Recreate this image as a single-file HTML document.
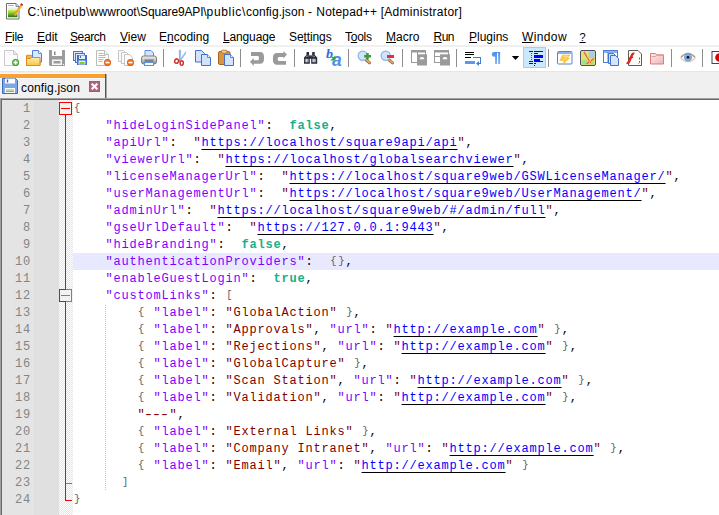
<!DOCTYPE html>
<html lang="en"><head><meta charset="utf-8"><title>config.json - Notepad++</title>
<style>
html,body{margin:0;padding:0}
body{width:719px;height:515px;overflow:hidden;background:#fff;position:relative;font-family:"Liberation Sans",sans-serif;font-size:12px;color:#000}
.abs{position:absolute}
#title{position:absolute;left:0;top:0;width:719px;height:24px;background:#fff}
#title .t{position:absolute;left:27px;top:4px;line-height:16px;white-space:nowrap;letter-spacing:0.235px}
#menu{position:absolute;left:0;top:24px;width:719px;height:21px;background:#fff}
#menu span{position:absolute;top:5px;line-height:16px;white-space:nowrap}
#menu u{text-decoration:underline;text-decoration-thickness:1px;text-underline-offset:.5px}
#tbsep{position:absolute;left:0;top:45px;width:719px;height:2px;background:#f0f0f0}
#toolbar{position:absolute;left:0;top:47px;width:719px;height:24px;background:#fff}
#toolbar svg{position:absolute;top:3px;width:16px;height:16px;overflow:visible}
#toolbar .sep{position:absolute;top:2px;width:1px;height:18px;background:#8d8d8d}
#tabbar{position:absolute;left:0;top:71px;width:719px;height:27px;background:#f0f0f0;border-top:1px solid #e6e6e6;box-sizing:border-box}
#tab{position:absolute;left:0;top:1px;width:105px;height:25px;background:#f1f1f1;border-top:1px solid #fbfbfb}
#tab::after{content:"";position:absolute;left:105px;top:0;width:1px;height:25px;background:#555;border-right:1px solid #a8a8a8}
#tab .stripe{position:absolute;left:0;top:0;width:105px;height:4px;background:#faa030;border-bottom:1px solid #f8f9fc}
#tab .name{position:absolute;left:21px;top:6px;line-height:16px;white-space:nowrap;letter-spacing:.15px}
#ed{position:absolute;left:0;top:98px;width:719px;height:417px;background:#fff;border-left:1px solid #a0a0a0;border-top:1px solid #a0a0a0;box-sizing:border-box}
#ed .in{position:absolute;left:0;top:0;width:718px;height:416px;border-left:1px solid #696969;border-top:1px solid #696969;box-sizing:border-box}
#lnm{position:absolute;left:2px;top:100px;width:32px;height:415px;background:#e4e4e4}
#bkm{position:absolute;left:34px;top:100px;width:25px;height:415px;background:#e0e0e0}
#fold{position:absolute;left:59px;top:100px;width:14px;height:415px;background:repeating-conic-gradient(#ffffff 0% 25%,#e4e4e4 0% 50%) 0 0/2px 2px}
#code{position:absolute;left:0;top:100px;width:719px;height:415px;font-family:"Liberation Mono",monospace;font-size:12px;letter-spacing:.8px}
.ln{position:absolute;left:0;width:719px;height:17px;line-height:17px;white-space:pre}
.ln b{position:absolute;left:2px;width:28.9px;text-align:right;font-weight:normal;color:#848484;top:1px;font-size:12px;letter-spacing:.8px}
.ln i{position:absolute;left:73.4px;top:1px;font-style:normal;color:#000}
.cur::before{content:"";position:absolute;left:73px;top:0;width:646px;height:17px;background:#e8e8ff}
.ln em{font-style:normal;color:#606060;font-size:10.5px;letter-spacing:1.7px;position:relative;top:-.6px;left:.7px}
.ln .h{display:inline-block;transform:scaleX(1.45);transform-origin:50% 50%}
.p{color:#8000ff}.v{color:#800000}.k{color:#18af8a;font-weight:bold}.d{color:#000}
.u{color:#0000ff;text-decoration:underline;text-decoration-color:#000;text-decoration-thickness:1px;text-underline-offset:3px}
#guide{position:absolute;left:105px;top:305px;width:1px;height:186px;background:repeating-linear-gradient(#c0c0c0 0 1px,transparent 1px 2px)}
</style></head><body>
<div id="title">
<svg class="abs" style="left:6px;top:3px" width="17" height="17" viewBox="0 0 17 17"><path d="M.5.500h9.500l3 3v12.500h-12.500z" fill="#fff" stroke="#6e6e6e"/><path d="M10 .5v3h3" fill="#e4e4e4" stroke="#6e6e6e" stroke-width=".8"/><path d="M2.500 2.500h1M4.500 2.500h1M6.500 2.500h1" stroke="#666"/><rect x="2" y="4.500" width="9.500" height="2" fill="#ececec"/><linearGradient id="gg" x1="0" y1="0" x2="0" y2="1"><stop offset="0" stop-color="#e6ec58"/><stop offset=".45" stop-color="#86cc30"/><stop offset="1" stop-color="#1a7410"/></linearGradient><rect x="2" y="6.700" width="9.500" height="7.500" fill="url(#gg)"/><path d="M15.300 1l-7.200 10.400l-.7 2.300l2-1.300l7.200-10.400z" fill="#f6aa1e" stroke="#c47a12" stroke-width=".5"/><path d="M15.300 1l1.300.9l-7.200 10.400" fill="none" stroke="#fbd46a" stroke-width=".7"/><path d="M15.200 .2l1.900 1.300l-.9 1.300l-1.900-1.300z" fill="#b01616"/><path d="M7.400 13.700l.4-1.400l.9.600z" fill="#333"/>
</svg>
<div class="t" style="left:27.4px;letter-spacing:0"><span style="letter-spacing:0.452px">C:\</span><span style="letter-spacing:0.375px">inetpub\</span><span style="letter-spacing:0.036px">wwwroot\</span><span style="letter-spacing:-0.150px">Square9API\</span><span style="letter-spacing:0.688px">public\</span><span style="letter-spacing:0.100px">config.json </span><span style="letter-spacing:0.528px">- </span><span style="letter-spacing:0.168px">Notepad++ </span><span style="letter-spacing:0.276px">[Administrator]</span></div>
</div>
<div id="menu">
<span style="left:5px;letter-spacing:-.3px"><u>F</u>ile</span>
<span style="left:37px"><u>E</u>dit</span>
<span style="left:70px;letter-spacing:-.4px"><u>S</u>earch</span>
<span style="left:120px"><u>V</u>iew</span>
<span style="left:159px">E<u>n</u>coding</span>
<span style="left:223px;letter-spacing:-.15px"><u>L</u>anguage</span>
<span style="left:289px;letter-spacing:-.1px">Se<u>t</u>tings</span>
<span style="left:345px;letter-spacing:-.28px">T<u>o</u>ols</span>
<span style="left:386px"><u>M</u>acro</span>
<span style="left:433.500px;letter-spacing:-.5px"><u>R</u>un</span>
<span style="left:469px"><u>P</u>lugins</span>
<span style="left:522px;letter-spacing:.38px"><u>W</u>indow</span>
<span style="left:579.500px;font-size:11px"><u>?</u></span>
</div>
<div id="tbsep"></div>
<div id="toolbar">
<svg style="left:4px" viewBox="0 0 16 16"><path d="M.5.5h9l4 4v11h-13z" fill="#fcfcfc" stroke="#c9c9c9"/><path d="M9.5.5v4h4z" fill="#eee" stroke="#c9c9c9"/><path d="M3 2.5h4M5 4.500h3" stroke="#ececec"/><circle cx="11.600" cy="12.500" r="3.500" fill="#3c9a2e"/><circle cx="11.600" cy="12.500" r="2.700" fill="#5fb84a"/><path d="M11.600 10.400v4.200M9.500 12.500h4.200" stroke="#fff" stroke-width="1.500"/></svg>
<svg style="left:26px" viewBox="0 0 16 16"><defs><linearGradient id="fo" x1="0" y1="0" x2="0" y2="1"><stop offset="0" stop-color="#fdeeb0"/><stop offset="1" stop-color="#f8c53e"/></linearGradient></defs><path d="M.5 5.300h5l1 1.500h7.500v8.700h-13.500z" fill="#f3b64c" stroke="#e08a22"/><path d="M6.500.5h6l3 3v8.500h-9z" fill="#dbe8fc" stroke="#4d7fd4"/><path d="M12.500.5v3h3" fill="#f2f7ff" stroke="#4d7fd4" stroke-width=".8"/><path d="M.5 8.500h4l1-1h8.500v8h-13.500z" fill="url(#fo)" stroke="#e08a22"/></svg>
<svg style="left:49px" viewBox="0 0 16 16"><path d="M0 0h16v16h-15l-1-1z" fill="#9c9c9c"/><rect x="3" y="0" width="10" height="6" fill="#fff"/><rect x="5" y="1.500" width="1.500" height="3.500" fill="#8a8a8a"/><rect x="3" y="9.500" width="10" height="5.500" fill="#f6f6f6"/><rect x="4.500" y="11" width="7" height="2.500" fill="#9c9c9c"/><rect x="14" y="14" width="1" height="1" fill="#fff"/></svg>
<svg style="left:72px" viewBox="0 0 16 16"><g fill="#dfe9fa" stroke="#4674c8"><rect x="1.500" y="1.500" width="9" height="9"/><rect x="3.500" y="3.500" width="9" height="9"/></g><rect x="5" y="5" width="10" height="10" fill="#3e6ec6"/><rect x="7" y="5.500" width="6" height="3.500" fill="#e6eefc"/><rect x="8" y="6" width="1" height="2" fill="#3e6ec6"/><rect x="6.500" y="10.500" width="7" height="4" fill="#dfe9fa"/><rect x="7.500" y="12" width="5" height="2" fill="#7ed321"/></svg>
<svg style="left:95px" viewBox="0 0 16 16"><path d="M1.500.5h8l4 4v11h-12z" fill="#fdfdfd" stroke="#bdbdbd"/><path d="M9.500.5v4h4" fill="#f2f2f2" stroke="#bdbdbd"/><path d="M3.500 3.500h5M3.500 5.500h7M3.500 7.500h7M3.500 9.500h5M3.500 11.500h4" stroke="#b8b8b8"/><circle cx="12.500" cy="12.500" r="3.500" fill="#e0580c"/><circle cx="12.500" cy="12.300" r="2.600" fill="#f47a20"/><rect x="10.500" y="11.800" width="4" height="1.500" fill="#fff"/></svg>
<svg style="left:118px" viewBox="0 0 16 16"><g fill="#fdfdfd" stroke="#c4c4c4"><path d="M.5.500h5l2 2v9h-7z"/><path d="M3.500 2.500h5l2 2v9h-7z"/><path d="M6.500 4.500h5l3 3v8h-8z"/></g><circle cx="12.500" cy="12.500" r="3.500" fill="#e0580c"/><circle cx="12.500" cy="12.300" r="2.600" fill="#f47a20"/><rect x="10.500" y="11.800" width="4" height="1.500" fill="#fff"/></svg>
<svg style="left:141px" viewBox="0 0 16 16"><defs><linearGradient id="pr" x1="0" y1="0" x2="0" y2="1"><stop offset="0" stop-color="#f4f4f4"/><stop offset=".5" stop-color="#c4c4c4"/><stop offset="1" stop-color="#8c8c8c"/></linearGradient></defs><path d="M4 .5h6l2.500 2.500v5h-8.500z" fill="#d6e5fb" stroke="#5b8fe0"/><rect x=".5" y="6" width="15" height="8" rx="2.200" fill="url(#pr)" stroke="#6e6e6e" stroke-width=".9"/><rect x="3.500" y="9.500" width="9" height="2.300" fill="#7e7e7e"/><rect x="3.500" y="12.500" width="9" height="3" fill="#f6f9ff" stroke="#5b8fe0"/></svg>
<div class="sep" style="left:163px"></div>
<svg style="left:172px" viewBox="0 0 16 16"><path d="M7.200 .2h1.500l-.5 9.500l-.8 2z" fill="#8fc0ea" stroke="#4f8fd0" stroke-width=".4"/><path d="M13.800 1.800l-.3 2l-4 5.700l-1.300-.3z" fill="#a8cdf0" stroke="#4f8fd0" stroke-width=".4"/><ellipse cx="4.600" cy="11.100" rx="1.900" ry="2.200" fill="none" stroke="#d2302a" stroke-width="1.500" transform="rotate(25 4.600 11.100)"/><ellipse cx="9.700" cy="13" rx="1.600" ry="2.300" fill="none" stroke="#d2302a" stroke-width="1.500"/></svg>
<svg style="left:195px" viewBox="0 0 16 16"><path d="M.5.500h6l3 3v8.500h-9z" fill="#d3e2fa" stroke="#3f72cc"/><path d="M6.500 4.500h6l3 3v8h-9z" fill="#d3e2fa" stroke="#3f72cc"/><path d="M12.500 4.500v3h3" fill="#eef4ff" stroke="#3f72cc" stroke-width=".8"/></svg>
<svg style="left:218px" viewBox="0 0 16 16"><rect x=".5" y="1.500" width="11.500" height="13" rx="1.500" fill="#d9953f" stroke="#a9631a"/><rect x="3.500" y=".2" width="5.500" height="3" rx="1" fill="#f6d27a" stroke="#a9631a" stroke-width=".8"/><path d="M6.500 4.500h6l3 3v8h-9z" fill="#d6e4fb" stroke="#3f72cc"/><path d="M12.500 4.500v3h3" fill="#eef4ff" stroke="#3f72cc" stroke-width=".8"/></svg>
<div class="sep" style="left:240px"></div>
<svg style="left:249px" viewBox="0 0 16 16"><path d="M2 2H11Q15 2 15 7V9Q15 13.700 11 13.700H4.700V16L1 11.750L4.700 8V10.200H9Q9.800 10.200 9.800 9V7Q9.800 6 9 6H2Z" fill="#9a9a9a"/></svg>
<svg style="left:272px" viewBox="0 0 16 16"><path d="M11.400 1L14.900 4.600L11.400 8.500V7H7Q5.700 7 5.700 8.500V9.500Q5.700 11 7 11H14V14.800H5Q.9 14.800 .9 10V8Q.9 3 5 3H11.400Z" fill="#9a9a9a"/></svg>
<div class="sep" style="left:294px"></div>
<svg style="left:303px" viewBox="0 0 16 16"><path d="M3.500 2h2.500v2.500l1 1h1.200l1-1v-2.500h2.500v3l2.500 2.500v6.300h-6v-5h-1.400v5h-5.800v-6.300l2.500-2.500z" fill="#2b2c32"/><rect x="1.800" y="8.800" width="4" height="3.400" fill="#8e99aa"/><rect x="9" y="8.800" width="4" height="3.400" fill="#8e99aa"/><rect x="3.200" y="8.800" width="1" height="3.400" fill="#dfe4ea"/><rect x="10.400" y="8.800" width="1" height="3.400" fill="#dfe4ea"/><path d="M3 6.500q4-2 9 0" stroke="#7f8da3" stroke-width="1" fill="none"/></svg>
<svg style="left:326px" viewBox="0 0 16 16"><text x="0" y="7.800" style="font-family:'Liberation Serif',serif;font-style:italic;font-weight:bold;font-size:11.500px" textLength="7" lengthAdjust="spacingAndGlyphs" fill="#2a6fdc">b</text><text x="5.900" y="15.800" style="font-family:'Liberation Sans',sans-serif;font-style:italic;font-weight:bold;font-size:17.500px" fill="#4f8fec">a</text><path d="M5 6l3 3.200M8.800 6.800v3.200h-3.200z" stroke="#2ea44a" stroke-width="1.100" fill="#2ea44a"/></svg>
<div class="sep" style="left:348px"></div>
<svg style="left:357px" viewBox="0 0 16 16"><path d="M9.300 10l3.200 2.800" stroke="#a86a2c" stroke-width="3" stroke-linecap="round"/><path d="M9.500 10l3 2.600" stroke="#dcb07a" stroke-width="1.400" stroke-linecap="round"/><circle cx="5.700" cy="5.700" r="4.600" fill="#d3e3fa" stroke="#8db2ec" stroke-width="1.200"/><path d="M10.500 3v6.600M7.200 6.300h6.800" stroke="#3a9a34" stroke-width="2.400"/></svg>
<svg style="left:380px" viewBox="0 0 16 16"><path d="M9.300 10l3.200 2.800" stroke="#a86a2c" stroke-width="3" stroke-linecap="round"/><path d="M9.500 10l3 2.600" stroke="#dcb07a" stroke-width="1.400" stroke-linecap="round"/><circle cx="5.700" cy="5.700" r="4.600" fill="#d3e3fa" stroke="#8db2ec" stroke-width="1.200"/><rect x="7" y="5" width="7" height="3" fill="#ef2a3a"/></svg>
<div class="sep" style="left:402px"></div>
<svg style="left:411px" viewBox="0 0 16 16"><rect x=".5" y="1" width="14" height="11.500" fill="#fff" stroke="#9a9a9a"/><rect x="0" y="0" width="15" height="2.500" fill="#9a9a9a"/><rect x="6" y="2" width="1" height="10" fill="#9a9a9a"/><rect x="6" y="4.300" width="10" height="11.200" fill="#9a9a9a"/><path d="M8.600 9.200a2.400 2.300 0 0 1 4.800 0z" fill="#fff"/></svg>
<svg style="left:434px" viewBox="0 0 16 16"><rect x=".5" y="1" width="14" height="11.500" fill="#fff" stroke="#9a9a9a"/><rect x="0" y="0" width="15" height="2.500" fill="#9a9a9a"/><rect x="0" y="6" width="15" height="1" fill="#9a9a9a"/><rect x="6" y="4.300" width="10" height="11.200" fill="#9a9a9a"/><path d="M8.600 9.200a2.400 2.300 0 0 1 4.800 0z" fill="#fff"/></svg>
<div class="sep" style="left:456px"></div>
<svg style="left:465px" viewBox="0 0 16 16" shape-rendering="crispEdges"><rect x="0" y="2" width="9" height="1" fill="#000"/><rect x="0" y="4" width="9" height="1" fill="#000"/><rect x="0" y="7" width="6" height="1" fill="#000"/><path d="M8 7.500h7.500v6h-3.500" fill="none" stroke="#3b7fdd"/><path d="M11 13.500l3-2.500v5z" fill="#3b7fdd" shape-rendering="auto"/><rect x="0" y="11" width="9.500" height="3" fill="#5e98e8"/></svg>
<svg style="left:488px" viewBox="0 0 16 16"><defs><linearGradient id="pg" x1="0" y1="0" x2="0" y2="1"><stop offset="0" stop-color="#4a8fee"/><stop offset="1" stop-color="#7db2f5"/></linearGradient></defs><path d="M12.100 2v12h-1.900v-11h-1.200v11h-1.900v-7.200h-.8a2.500 2.400 0 0 1 0-4.800z" fill="url(#pg)"/></svg>
<svg style="left:507px" viewBox="0 0 16 16"><path d="M4.800 5.900h7.400l-3.700 4.200z" fill="#000"/></svg>
<div class="abs" style="left:523px;top:0;width:21px;height:19px;border:1px solid #99d1ff;background:#cce8ff"></div>
<svg style="left:527px" viewBox="0 0 16 16" shape-rendering="crispEdges"><g fill="#0000ff"><rect x="2" y="1" width="4" height="1"/><rect x="7" y="1" width="9" height="1"/><rect x="7" y="3" width="4" height="1"/><rect x="7" y="5" width="9" height="3"/><rect x="7" y="9" width="6" height="2"/><rect x="2" y="11" width="4" height="1"/><rect x="7" y="11" width="9" height="1"/><rect x="2" y="13" width="4" height="1"/><rect x="7" y="13" width="2" height="1"/><rect x="7" y="15" width="1" height="1"/></g><g fill="#ff0000"><rect x="4" y="3" width="1" height="1"/><rect x="4" y="5" width="1" height="1"/><rect x="4" y="7" width="1" height="1"/><rect x="4" y="9" width="1" height="1"/></g></svg>
<div class="sep" style="left:548px"></div>
<svg style="left:557px" viewBox="0 0 16 16"><rect x=".5" y="1.500" width="14.500" height="12.500" rx="1" fill="#fefefe" stroke="#4f84da"/><rect x="1" y="2" width="13.500" height="2" fill="#8db2ee"/><path d="M5.500 5h7.500l-3 3h2.500l-7 7l1.800-4.500h-4.300z" fill="#f6cd4c" stroke="#eeb030" stroke-width=".5"/><path d="M6.500 6h4l-2.500 3" stroke="#fbe596" stroke-width="1" fill="none"/></svg>
<svg style="left:580px" viewBox="0 0 16 16"><rect x=".5" y=".5" width="15" height="15" rx="1.500" fill="#e0e276" stroke="#4e4e5e"/><rect x="8.500" y="1.500" width="6" height="6.500" fill="#a6cbf0"/><path d="M1.500 10.500q3-2 6 .5t6.500-1v4.500h-12.500z" fill="#a2e088"/><path d="M4 2l6.500 11M14 8.500l-7.500 5.500" stroke="#f0563e" stroke-width="1.300" fill="none"/><path d="M8 2v6M11 8l-2 6" stroke="#f4e04a" stroke-width=".8" fill="none"/></svg>
<svg style="left:603px" viewBox="0 0 16 16"><rect x=".5" y=".5" width="14" height="12" fill="#fdfdfd" stroke="#4f7fd4"/><rect x="1" y="1" width="13" height="2" fill="#8fb0ea"/><rect x="4.500" y="2" width="1" height="10" fill="#4f7fd4"/><path d="M5.500 3.500h5l2 2v8h-7z" fill="#cfe0fa" stroke="#3f72cc"/><path d="M7.500 5.500h5l3 3v7h-8z" fill="#d6e4fb" stroke="#3f72cc"/></svg>
<svg style="left:626px" viewBox="0 0 16 16"><path d="M2.500.5h9.500l3.500 3.500v11.500h-13z" fill="#fdfcf7" stroke="#5c5c5c"/><path d="M13.500 7.500v2M13.500 11v1.500l-1 1" fill="none" stroke="#55555f" stroke-width=".9"/><path d="M8.300 3.800c-1.500-.6-2.200.6-2.800 2.200l-2.300 5.500c-.5 1.300-1.300 1.700-2.600 1.300" fill="none" stroke="#e22424" stroke-width="2.300"/><path d="M2.800 8.500l4.200-1.500" stroke="#e22424" stroke-width="1.400"/></svg>
<svg style="left:649px" viewBox="0 0 16 16"><defs><linearGradient id="fr" x1="0" y1="0" x2="1" y2="1"><stop offset="0" stop-color="#fbeaea"/><stop offset="1" stop-color="#eeb4b4"/></linearGradient></defs><path d="M1.500 3.500h5l1 1.300h7v9.200h-13z" fill="url(#fr)" stroke="#dc7c7c"/><path d="M2.500 6.500h4l1-1h6" fill="none" stroke="#e29a9a" stroke-width=".9"/></svg>
<div class="sep" style="left:671px"></div>
<svg style="left:680px" viewBox="0 0 16 16"><path d="M.5 8q7.500-9 15 0q-7.500 8-15 0z" fill="#f7f5f0" stroke="#d9b48a" stroke-width=".9"/><path d="M1 7q7-7.500 14 0" fill="none" stroke="#9a9a9a" stroke-width="1.200"/><circle cx="8" cy="7.500" r="3.600" fill="#86acdf" stroke="#5f8fd0" stroke-width=".7"/><circle cx="8" cy="7.300" r="1.400" fill="#101018"/></svg>
<div class="sep" style="left:702px"></div>
<svg style="left:711px" viewBox="0 0 16 16"><rect x="1" y="1.500" width="15" height="12" fill="#fff" stroke="#444"/><circle cx="8.500" cy="7.500" r="4.300" fill="#dd0000"/></svg>

</div>
<div id="tabbar">
<div id="tab"><div class="stripe"></div>
<svg class="abs" style="left:2px;top:4px" width="16" height="16" viewBox="0 0 16 16"><path d="M.5 .5h13l2 2v13h-15z" fill="#7ea6e4" stroke="#3a6cc0"/><rect x="3" y=".5" width="10" height="5" fill="#fdfdfd"/><rect x="4.800" y="1.500" width="1.400" height="3" fill="#3a6cc0"/><rect x="3" y="10" width="10" height="5" fill="#fdfdfd"/><rect x="4" y="11.500" width="8" height="1" fill="#7cc04a"/><rect x="4" y="13" width="8" height="1" fill="#7cc04a"/></svg>
<div class="name">config.json</div>
<svg class="abs" style="left:89px;top:7px" width="11" height="11" viewBox="0 0 11 11"><rect width="11" height="11" fill="#a9587a"/><rect x="1" y="1" width="9" height="9" fill="#b0647f"/><path d="M2.700 2.700L8.300 8.300M8.300 2.700L2.700 8.300" stroke="#fff" stroke-width="2.100"/></svg>
</div>
</div>
<div id="ed"><div class="in"></div></div>
<div id="lnm"></div><div id="bkm"></div><div id="fold"></div>
<svg class="abs" style="left:59px;top:100px" width="14" height="415" viewBox="0 0 14 415" shape-rendering="crispEdges">
<g fill="#ff0000"><rect x="6" y="15" width="1" height="386"/><rect x="6" y="400" width="7" height="1"/></g>
<rect x="0.500" y="2.500" width="12" height="12" fill="#f2f2f2" stroke="#ff0000" shape-rendering="crispEdges"/><rect x="2" y="8" width="9" height="1" fill="#ff0000"/>
<rect x="0.500" y="189.500" width="12" height="12" fill="#f2f2f2" stroke="#808080"/><path d="M6.500 189.500h-6v12h6" fill="none" stroke="#ff0000"/><rect x="2" y="195" width="9" height="1" fill="#808080"/>
<rect x="7" y="383" width="6" height="1" fill="#808080"/>

</svg>
<div id="code">
<div class="ln" style="top:0px"><b>1</b><i><span class="d"><em>{</em></span></i></div>
<div class="ln" style="top:17px"><b>2</b><i>    <span class="p">"hideLoginSidePanel"</span><span class="d">:  </span><span class="k">false</span><span class="d">,</span></i></div>
<div class="ln" style="top:34px"><b>3</b><i>    <span class="p">"apiUrl"</span><span class="d">:  </span><span class="v">"</span><span class="u">https://localhost/square9api/api</span><span class="v">"</span><span class="d">,</span></i></div>
<div class="ln" style="top:51px"><b>4</b><i>    <span class="p">"viewerUrl"</span><span class="d">:  </span><span class="v">"</span><span class="u">https://localhost/globalsearchviewer</span><span class="v">"</span><span class="d">,</span></i></div>
<div class="ln" style="top:68px"><b>5</b><i>    <span class="p">"licenseManagerUrl"</span><span class="d">:  </span><span class="v">"</span><span class="u">https://localhost/square9web/GSWLicenseManager/</span><span class="v">"</span><span class="d">,</span></i></div>
<div class="ln" style="top:85px"><b>6</b><i>    <span class="p">"userManagementUrl"</span><span class="d">:  </span><span class="v">"</span><span class="u">https://localhost/square9web/UserManagement/</span><span class="v">"</span><span class="d">,</span></i></div>
<div class="ln" style="top:102px"><b>7</b><i>    <span class="p">"adminUrl"</span><span class="d">:  </span><span class="v">"</span><span class="u">https://localhost/square9web/#/admin/full</span><span class="v">"</span><span class="d">,</span></i></div>
<div class="ln" style="top:119px"><b>8</b><i>    <span class="p">"gseUrlDefault"</span><span class="d">:  </span><span class="v">"</span><span class="u">https://127.0.0.1:9443</span><span class="v">"</span><span class="d">,</span></i></div>
<div class="ln" style="top:136px"><b>9</b><i>    <span class="p">"hideBranding"</span><span class="d">:  </span><span class="k">false</span><span class="d">,</span></i></div>
<div class="ln cur" style="top:153px"><b>10</b><i>    <span class="p">"authenticationProviders"</span><span class="d">:  <em>{}</em>,</span></i></div>
<div class="ln" style="top:170px"><b>11</b><i>    <span class="p">"enableGuestLogin"</span><span class="d">:  </span><span class="k">true</span><span class="d">,</span></i></div>
<div class="ln" style="top:187px"><b>12</b><i>    <span class="p">"customLinks"</span><span class="d">: <em>[</em></span></i></div>
<div class="ln" style="top:204px"><b>13</b><i>        <span class="d"><em>{</em> </span><span class="p">"label"</span><span class="d">: </span><span class="v">"GlobalAction"</span><span class="d"> <em>}</em>,</span></i></div>
<div class="ln" style="top:221px"><b>14</b><i>        <span class="d"><em>{</em> </span><span class="p">"label"</span><span class="d">: </span><span class="v">"Approvals"</span><span class="d">, </span><span class="p">"url"</span><span class="d">: </span><span class="v">"</span><span class="u">http://example.com</span><span class="v">"</span><span class="d"> <em>}</em>,</span></i></div>
<div class="ln" style="top:238px"><b>15</b><i>        <span class="d"><em>{</em> </span><span class="p">"label"</span><span class="d">: </span><span class="v">"Rejections"</span><span class="d">, </span><span class="p">"url"</span><span class="d">: </span><span class="v">"</span><span class="u">http://example.com</span><span class="v">"</span><span class="d"> <em>}</em>,</span></i></div>
<div class="ln" style="top:255px"><b>16</b><i>        <span class="d"><em>{</em> </span><span class="p">"label"</span><span class="d">: </span><span class="v">"GlobalCapture"</span><span class="d"> <em>}</em>,</span></i></div>
<div class="ln" style="top:272px"><b>17</b><i>        <span class="d"><em>{</em> </span><span class="p">"label"</span><span class="d">: </span><span class="v">"Scan Station"</span><span class="d">, </span><span class="p">"url"</span><span class="d">: </span><span class="v">"</span><span class="u">http://example.com</span><span class="v">"</span><span class="d"> <em>}</em>,</span></i></div>
<div class="ln" style="top:289px"><b>18</b><i>        <span class="d"><em>{</em> </span><span class="p">"label"</span><span class="d">: </span><span class="v">"Validation"</span><span class="d">, </span><span class="p">"url"</span><span class="d">: </span><span class="v">"</span><span class="u">http://example.com</span><span class="v">"</span><span class="d"> <em>}</em>,</span></i></div>
<div class="ln" style="top:306px"><b>19</b><i>        <span class="v">"</span><span class="v"><span class="h">-</span><span class="h">-</span><span class="h">-</span></span><span class="v">"</span><span class="d">,</span></i></div>
<div class="ln" style="top:323px"><b>20</b><i>        <span class="d"><em>{</em> </span><span class="p">"label"</span><span class="d">: </span><span class="v">"External Links"</span><span class="d"> <em>}</em>,</span></i></div>
<div class="ln" style="top:340px"><b>21</b><i>        <span class="d"><em>{</em> </span><span class="p">"label"</span><span class="d">: </span><span class="v">"Company Intranet"</span><span class="d">, </span><span class="p">"url"</span><span class="d">: </span><span class="v">"</span><span class="u">http://example.com</span><span class="v">"</span><span class="d"> <em>}</em>,</span></i></div>
<div class="ln" style="top:357px"><b>22</b><i>        <span class="d"><em>{</em> </span><span class="p">"label"</span><span class="d">: </span><span class="v">"Email"</span><span class="d">, </span><span class="p">"url"</span><span class="d">: </span><span class="v">"</span><span class="u">http://example.com</span><span class="v">"</span><span class="d"> <em>}</em></span></i></div>
<div class="ln" style="top:374px"><b>23</b><i>      <span class="d"><em>]</em></span></i></div>
<div class="ln" style="top:391px"><b>24</b><i><span class="d"><em>}</em></span></i></div>
</div>
<div id="guide"></div>
</body></html>
